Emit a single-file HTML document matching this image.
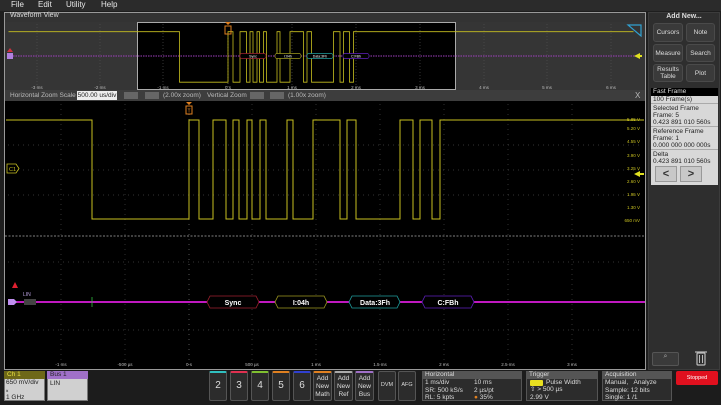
<!DOCTYPE html>
<html><head><meta charset="utf-8"><style>
*{margin:0;padding:0;box-sizing:border-box}
body{width:721px;height:405px;background:#1e1e1e;font-family:"Liberation Sans",sans-serif;position:relative;overflow:hidden;color:#ddd}
.a{position:absolute}
.menu span{position:absolute;top:0;font-size:8px;color:#e8e8e8}
.btn{position:absolute;background:#3a3a3a;border:1px solid #4a4a4a;border-radius:3px;color:#ddd;font-size:6.5px;text-align:center;display:flex;align-items:center;justify-content:center;line-height:7px}
.ff div{font-size:6.5px;color:#222;line-height:7px;padding-left:2px}
.bb{position:absolute;top:371px;height:30px;background:#2c2c2c;border:1px solid #555;border-radius:2px;color:#ddd;text-align:center}
.bt{position:absolute;font-size:6.5px;color:#ddd;line-height:7.5px}
</style></head><body>
<div class="a menu" style="left:0;top:0;width:721px;height:11px;background:#2b2b2b">
<span style="left:11px">File</span><span style="left:38px">Edit</span><span style="left:66px">Utility</span><span style="left:101px">Help</span></div>
<div class="a" style="left:4px;top:12px;width:642px;height:358px;border:1px solid #999;background:#333"></div>
<div class="a" style="left:10px;top:12px;font-size:7px;color:#ddd">Waveform View</div>
<div class="a" style="left:5px;top:22px;width:640px;height:68px;background:#353535"></div>
<div class="a" style="left:137px;top:22px;width:319px;height:68px;background:#000;border:1px solid #aaa"></div>
<svg class="a" style="left:0;top:0" width="650" height="100">
<g stroke="#555" stroke-dasharray="1,2" stroke-width="0.6">
<line x1="37" y1="24" x2="37" y2="88"/><line x1="100" y1="24" x2="100" y2="88"/><line x1="163" y1="24" x2="163" y2="88"/><line x1="292" y1="24" x2="292" y2="88"/><line x1="356" y1="24" x2="356" y2="88"/><line x1="420" y1="24" x2="420" y2="88"/><line x1="484" y1="24" x2="484" y2="88"/><line x1="547" y1="24" x2="547" y2="88"/><line x1="611" y1="24" x2="611" y2="88"/>
<line x1="228" y1="35" x2="228" y2="88" stroke="#888"/></g>
<line x1="8" y1="56" x2="636" y2="56" stroke="#a040c0" stroke-width="1" stroke-dasharray="1.5,1"/>
<g transform="translate(133.5,-29.5) scale(0.5,0.51)"><polyline fill="none" stroke="#c8c020" stroke-width="1.6" points="-250,120 92,120 92,219 189,219 189,120 199,120 199,219 213,219 213,120 226,120 226,219 233,219 233,120 239,120 239,219 247,219 247,120 252,120 252,219 260,219 260,120 266,120 266,219 287,219 287,120 293,120 293,219 313,219 313,120 340,120 340,219 347,219 347,120 356,120 356,219 400,219 400,120 413,120 413,219 420,219 420,120 432,120 432,219 440,219 440,120 1000,120"/></g>
<g font-size="3.5" font-family="Liberation Sans" fill="#fff" text-anchor="middle">
<rect x="240" y="53.5" width="26" height="5" rx="2" fill="#000" stroke="#a02030" stroke-width="0.7"/><text x="253" y="57.5">Sync</text>
<rect x="275" y="53.5" width="26" height="5" rx="2" fill="#000" stroke="#a09a20" stroke-width="0.7"/><text x="288" y="57.5">I:04h</text>
<rect x="307" y="53.5" width="26" height="5" rx="2" fill="#000" stroke="#20a0a0" stroke-width="0.7"/><text x="320" y="57.5">Data:3Fh</text>
<rect x="343" y="53.5" width="26" height="5" rx="2" fill="#000" stroke="#6020c0" stroke-width="0.7"/><text x="356" y="57.5">C:FBh</text></g>
<rect x="7" y="53" width="6" height="6" fill="#b080e0"/>
<polygon points="10,48 13,52 7,52" fill="#d03040"/>
<polygon points="634,56 640,53 640,59" fill="#e0e020"/><rect x="638" y="55" width="4" height="2" fill="#e0e020"/>
<polygon points="628,25 641,25 641,36" fill="none" stroke="#30a0d0" stroke-width="1.2"/>
<rect x="225" y="26" width="6" height="8" fill="none" stroke="#e08020" stroke-width="1"/><polygon points="225,22 231,22 228,25" fill="#e08020"/>
<g font-size="4.5" font-family="Liberation Sans" fill="#bbb" text-anchor="middle">
<text x="37" y="89">-3 ms</text><text x="100" y="89">-2 ms</text><text x="163" y="89">-1 ms</text><text x="228" y="89">0 s</text><text x="292" y="89">1 ms</text><text x="356" y="89">2 ms</text><text x="420" y="89">3 ms</text><text x="484" y="89">4 ms</text><text x="547" y="89">5 ms</text><text x="611" y="89">6 ms</text></g>
</svg>
<div class="a" style="left:5px;top:90px;width:640px;height:11px;background:#3d3d3d"></div>
<div class="a" style="left:10px;top:92px;font-size:6.5px;color:#bbb">Horizontal Zoom Scale</div>
<div class="a" style="left:77px;top:91px;width:40px;height:9px;background:#eee;color:#222;font-size:6.5px;text-align:center;line-height:9px">500.00 us/div</div>
<div class="a" style="left:124px;top:92px;width:14px;height:7px;background:#666"></div>
<div class="a" style="left:145px;top:92px;width:14px;height:7px;background:#666"></div>
<div class="a" style="left:163px;top:92px;font-size:6.5px;color:#bbb">(2.00x zoom)</div>
<div class="a" style="left:207px;top:92px;font-size:6.5px;color:#bbb">Vertical Zoom</div>
<div class="a" style="left:250px;top:92px;width:14px;height:7px;background:#666"></div>
<div class="a" style="left:270px;top:92px;width:14px;height:7px;background:#666"></div>
<div class="a" style="left:288px;top:92px;font-size:6.5px;color:#bbb">(1.00x zoom)</div>
<div class="a" style="left:635px;top:91px;font-size:8px;color:#bbb">X</div>
<div class="a" style="left:5px;top:101px;width:640px;height:268px;background:#000"></div>
<svg class="a" style="left:0;top:0" width="650" height="370">
<g stroke="#444" stroke-dasharray="1,4" stroke-width="0.7">
<line x1="61" y1="104" x2="61" y2="366"/><line x1="125" y1="104" x2="125" y2="366"/><line x1="252" y1="104" x2="252" y2="366"/><line x1="316" y1="104" x2="316" y2="366"/><line x1="380" y1="104" x2="380" y2="366"/><line x1="444" y1="104" x2="444" y2="366"/><line x1="508" y1="104" x2="508" y2="366"/><line x1="572" y1="104" x2="572" y2="366"/>
<line x1="8" y1="145" x2="640" y2="145"/><line x1="8" y1="170" x2="640" y2="170"/><line x1="8" y1="195" x2="640" y2="195"/>
<line x1="8" y1="262" x2="640" y2="262"/><line x1="8" y1="330" x2="640" y2="330"/>
<line x1="189" y1="104" x2="189" y2="366" stroke="#777"/></g>
<line x1="5" y1="236" x2="645" y2="236" stroke="#aaa" stroke-width="0.8" stroke-dasharray="2,1.5"/>
<polyline fill="none" stroke="#c8c020" stroke-width="1" points="6,120 92,120 92,219 189,219 189,120 199,120 199,219 213,219 213,120 226,120 226,219 233,219 233,120 239,120 239,219 247,219 247,120 252,120 252,219 260,219 260,120 266,120 266,219 287,219 287,120 293,120 293,219 313,219 313,120 340,120 340,219 347,219 347,120 356,120 356,219 400,219 400,120 413,120 413,219 420,219 420,120 432,120 432,219 440,219 440,120 644,120"/>
<line x1="8" y1="302" x2="645" y2="302" stroke="#ff20ff" stroke-width="1.5"/>
<g font-size="7" font-family="Liberation Sans" fill="#fff" text-anchor="middle" font-weight="bold">
<polygon points="210,296 256,296 259,302 256,308 210,308 207,302" fill="#000" stroke="#a02030" stroke-width="0.8"/><text x="233" y="305">Sync</text>
<polygon points="278,296 324,296 327,302 324,308 278,308 275,302" fill="#000" stroke="#a09a20" stroke-width="0.8"/><text x="301" y="305">I:04h</text>
<polygon points="352,296 397,296 400,302 397,308 352,308 349,302" fill="#000" stroke="#20a0a0" stroke-width="0.8"/><text x="375" y="305">Data:3Fh</text>
<polygon points="425,296 471,296 474,302 471,308 425,308 422,302" fill="#000" stroke="#6020c0" stroke-width="0.8"/><text x="448" y="305">C:FBh</text></g>
<line x1="92" y1="297" x2="92" y2="307" stroke="#30c040" stroke-width="0.8"/>
<polygon points="8,299 14,299 17,302 14,305 8,305" fill="#c090f0"/>
<rect x="24" y="299" width="12" height="6" fill="#444"/>
<text x="23" y="296" font-size="5" fill="#b8a0e0" font-family="Liberation Sans">LIN</text>
<polygon points="15,282 18,288 12,288" fill="#e02030"/>
<polygon points="7,164 16,164 19,168.5 16,173 7,173" fill="#000" stroke="#c8c020" stroke-width="0.8"/><text x="9" y="171" font-size="5.5" fill="#c8c020" font-family="Liberation Sans">C1</text>
<rect x="186" y="106" width="6" height="8" fill="none" stroke="#e08020" stroke-width="1"/><polygon points="186,102 192,102 189,105" fill="#e08020"/><text x="187.5" y="112.5" font-size="5" fill="#e08020" font-family="Liberation Sans">T</text>
<polygon points="634,174 640,171 640,177" fill="#e0e020"/><rect x="638" y="173" width="6" height="2" fill="#e0e020"/>
<g font-size="4.5" font-family="Liberation Sans" fill="#bbb" text-anchor="middle">
<text x="61" y="366">-1 ms</text><text x="125" y="366">-500 µs</text><text x="189" y="366">0 s</text><text x="252" y="366">500 µs</text><text x="316" y="366">1 ms</text><text x="380" y="366">1.5 ms</text><text x="444" y="366">2 ms</text><text x="508" y="366">2.5 ms</text><text x="572" y="366">3 ms</text></g>
<g font-size="4.5" font-family="Liberation Sans" fill="#c8c020" text-anchor="end">
<text x="640" y="121">5.85 V</text><text x="640" y="130">5.20 V</text><text x="640" y="143">4.55 V</text><text x="640" y="157">3.90 V</text><text x="640" y="170">3.25 V</text><text x="640" y="183">2.60 V</text><text x="640" y="196">1.95 V</text><text x="640" y="209">1.30 V</text><text x="640" y="222">650 mV</text></g>
</svg>
<div class="a" style="left:648px;top:12px;width:72px;height:358px;background:#2e2e2e;border:1px solid #3c3c3c"></div>
<div class="a" style="left:648px;top:13px;width:72px;text-align:center;font-size:7px;font-weight:bold;color:#ddd">Add New...</div>
<div class="btn" style="left:653px;top:23px;width:30px;height:19px">Cursors</div>
<div class="btn" style="left:686px;top:23px;width:29px;height:19px">Note</div>
<div class="btn" style="left:653px;top:44px;width:30px;height:18px">Measure</div>
<div class="btn" style="left:686px;top:44px;width:29px;height:18px">Search</div>
<div class="btn" style="left:653px;top:64px;width:30px;height:18px">Results<br>Table</div>
<div class="btn" style="left:686px;top:64px;width:29px;height:18px">Plot</div>
<div class="a" style="left:651px;top:88px;width:67px;height:8px;background:#000;color:#ddd;font-size:6.5px;padding-left:2px;line-height:8px">Fast Frame</div>
<div class="a ff" style="left:651px;top:96px;width:67px;height:89px;background:#d8d8d8">
<div style="border-bottom:1px solid #aaa;height:8px">100 Frame(s)</div>
<div style="border-bottom:1px solid #aaa;padding-top:1px">Selected Frame<br>Frame: 5<br>0.423 891 010 560s</div>
<div style="border-bottom:1px solid #aaa;padding-top:1px">Reference Frame<br>Frame: 1<br>0.000 000 000 000s</div>
<div style="padding-top:1px">Delta<br>0.423 891 010 560s</div>
</div>
<div class="a" style="left:655px;top:166px;width:22px;height:16px;background:#c8c8c8;border:1px solid #999;font-size:11px;color:#333;text-align:center;line-height:15px;font-weight:bold">&lt;</div>
<div class="a" style="left:680px;top:166px;width:22px;height:16px;background:#c8c8c8;border:1px solid #999;font-size:11px;color:#333;text-align:center;line-height:15px;font-weight:bold">&gt;</div>
<div class="a" style="left:652px;top:352px;width:27px;height:14px;background:#3a3a3a;border:1px solid #555;border-radius:2px;color:#aaa;font-size:7px;text-align:center">⌕</div>
<svg class="a" style="left:694px;top:349px" width="14" height="18"><rect x="3" y="4" width="8" height="12" rx="1" fill="none" stroke="#bbb" stroke-width="1.2"/><line x1="1" y1="3" x2="13" y2="3" stroke="#bbb" stroke-width="1.2"/><line x1="5.5" y1="6" x2="5.5" y2="14" stroke="#bbb"/><line x1="8.5" y1="6" x2="8.5" y2="14" stroke="#bbb"/></svg>
<div class="a" style="left:0;top:370px;width:721px;height:35px;background:#1c1c1c"></div>
<div class="a" style="left:4px;top:371px;width:41px;height:30px;background:#d0d0d0;border:1px solid #777"></div>
<div class="a" style="left:4px;top:371px;width:41px;height:8px;background:#6e6818;color:#e8e040;font-size:6.5px;padding-left:3px;line-height:8px">Ch 1</div>
<div class="bt" style="left:6px;top:379px;color:#222">650 mV/div<br><span style="font-size:4px">⩙</span><br>1 GHz</div>
<div class="a" style="left:47px;top:371px;width:41px;height:30px;background:#d0d0d0;border:1px solid #777"></div>
<div class="a" style="left:47px;top:371px;width:41px;height:8px;background:#a070c8;color:#222;font-size:6.5px;padding-left:3px;line-height:8px">Bus 1</div>
<div class="bt" style="left:50px;top:380px;color:#222">LIN</div>
<div class="bb" style="left:209px;width:18px;border-top:2px solid #30c0c0;font-size:10px;line-height:26px">2</div>
<div class="bb" style="left:230px;width:18px;border-top:2px solid #e03050;font-size:10px;line-height:26px">3</div>
<div class="bb" style="left:251px;width:18px;border-top:2px solid #80c030;font-size:10px;line-height:26px">4</div>
<div class="bb" style="left:272px;width:18px;border-top:2px solid #e08020;font-size:10px;line-height:26px">5</div>
<div class="bb" style="left:293px;width:18px;border-top:2px solid #3040d0;font-size:10px;line-height:26px">6</div>
<div class="bb" style="left:313px;width:19px;border-top:2px solid #e08020;font-size:6.5px;line-height:8px;padding-top:2px">Add<br>New<br>Math</div>
<div class="bb" style="left:334px;width:19px;border-top:2px solid #aaa;font-size:6.5px;line-height:8px;padding-top:2px">Add<br>New<br>Ref</div>
<div class="bb" style="left:355px;width:19px;border-top:2px solid #a070c8;font-size:6.5px;line-height:8px;padding-top:2px">Add<br>New<br>Bus</div>
<div class="bb" style="left:378px;width:18px;font-size:5.5px;line-height:26px">DVM</div>
<div class="bb" style="left:398px;width:18px;font-size:5.5px;line-height:26px">AFG</div>
<div class="a" style="left:422px;top:371px;width:100px;height:30px;background:#2c2c2c;border:1px solid #555"></div>
<div class="a" style="left:422px;top:371px;width:100px;height:8px;background:#555;color:#ddd;font-size:6.5px;padding-left:3px;line-height:8px">Horizontal</div>
<div class="bt" style="left:425px;top:379px">1 ms/div<br>SR: 500 kS/s<br>RL: 5 kpts</div>
<div class="bt" style="left:474px;top:379px">10 ms<br>2 µs/pt<br><span style="color:#e08020">●</span> 35%</div>
<div class="a" style="left:526px;top:371px;width:72px;height:30px;background:#2c2c2c;border:1px solid #555"></div>
<div class="a" style="left:526px;top:371px;width:72px;height:8px;background:#555;color:#ddd;font-size:6.5px;padding-left:3px;line-height:8px">Trigger</div>
<div class="a" style="left:530px;top:380px;width:13px;height:6px;background:#e8e020;border-radius:1px"></div>
<div class="bt" style="left:546px;top:379px">Pulse Width</div>
<div class="bt" style="left:530px;top:386px">⇧ &gt; 500 µs<br>2.99 V</div>
<div class="a" style="left:602px;top:371px;width:70px;height:30px;background:#2c2c2c;border:1px solid #555"></div>
<div class="a" style="left:602px;top:371px;width:70px;height:8px;background:#555;color:#ddd;font-size:6.5px;padding-left:3px;line-height:8px">Acquisition</div>
<div class="bt" style="left:605px;top:379px">Manual, &nbsp;&nbsp;Analyze<br>Sample: 12 bits<br>Single: 1 /1</div>
<div class="a" style="left:676px;top:371px;width:42px;height:14px;background:#e0101e;border-radius:2px;color:#fff;font-size:5.5px;text-align:center;line-height:14px">Stopped</div>
</body></html>
